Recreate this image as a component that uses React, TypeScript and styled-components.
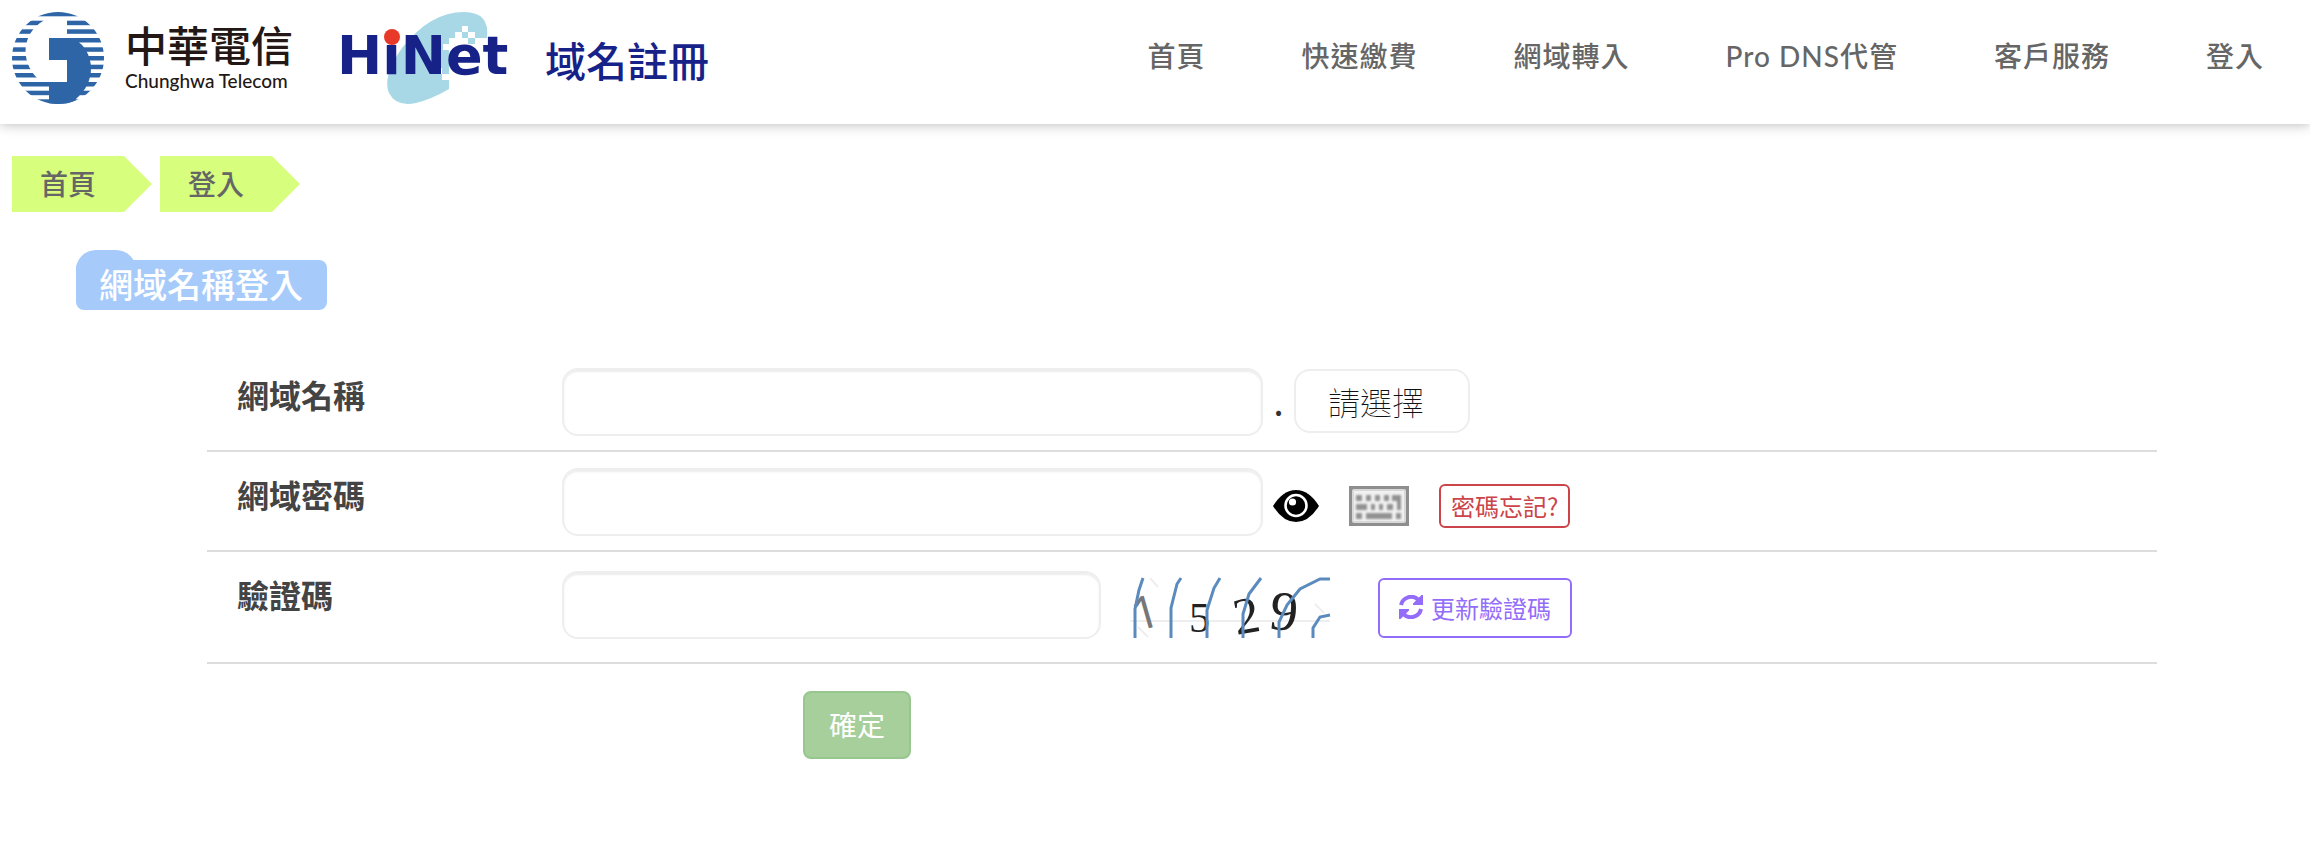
import React from "react";
import styled, { createGlobalStyle } from "styled-components";

const sans = `"Noto Sans CJK TC", "Noto Sans", sans-serif`;

const GlobalStyle = createGlobalStyle`
  *, *::before, *::after { box-sizing: border-box; }
  body { margin: 0; background: #fff; color: #444; font-family: ${sans}; }
`;

const Header = styled.header`
  display: flex;
  align-items: center;
  justify-content: space-between;
  height: 124px;
  padding: 0 46px 0 12px;
  background: #fff;
  box-shadow: 0 0 12px rgba(0, 0, 0, 0.3);
`;

const Brand = styled.a`
  display: flex;
  margin-bottom: 8px;
  text-decoration: none;
`;

const Nav = styled.nav`
  display: flex;
  gap: 96px;
  margin-bottom: 12px;
`;

const NavLink = styled.a`
  color: #666;
  font-family: Lato, ${sans};
  font-size: 28px;
  font-weight: 500;
  letter-spacing: 1px;
  line-height: 40px;
  text-decoration: none;
  white-space: nowrap;
`;

const Breadcrumbs = styled.nav`
  display: flex;
  gap: 8px;
  padding: 32px 12px 0;
`;

const Crumb = styled.a`
  width: 140px;
  padding: 0 0 2px 28px;
  background: #d7fe7d;
  clip-path: polygon(0 0, 112px 0, 100% 50%, 112px 100%, 0 100%);
  color: #666;
  font-size: 28px;
  font-weight: 500;
  line-height: 54px;
  text-decoration: none;
`;

const Title = styled.h1`
  position: relative;
  width: max-content;
  margin: 48px 0 0 76px;
  padding: 0 24px 2px 23px;
  border-radius: 8px;
  background: #a6cbfb;
  color: #fff;
  font-size: 34px;
  font-weight: 500;
  line-height: 48px;

  &::before {
    content: "";
    position: absolute;
    z-index: -1;
    top: -10px;
    left: 0;
    width: 60px;
    height: 40px;
    border-radius: 20px 20px 0 0;
    background: #a6cbfb;
  }
`;

const Form = styled.form`
  margin: 42px 153px 0 207px;
`;

const Row = styled.div<{ $tall?: boolean }>`
  display: flex;
  align-items: flex-start;
  min-height: ${(p) => (p.$tall ? 112 : 100)}px;
  border-bottom: 2px solid #ddd;
`;

const Label = styled.label`
  flex: 0 0 355px;
  padding: 18px 0 0 30px;
  font-size: 32px;
  font-weight: 700;
  line-height: 48px;
`;

const Controls = styled.div<{ $tall?: boolean }>`
  display: flex;
  flex: 1;
  align-items: center;
  padding-top: ${(p) => (p.$tall ? 19 : 16)}px;
`;

const TextInput = styled.input<{ $width: number }>`
  flex: 0 1 ${(p) => p.$width}px;
  min-width: 0;
  height: 68px;
  padding: 0 16px;
  border: 2px solid #eee;
  border-radius: 16px;
  background: #fff;
  box-shadow: inset 0 2px 2px rgba(0, 0, 0, 0.075);
  color: #444;
  font: 400 32px ${sans};
`;

const Dot = styled.span`
  width: 31px;
  color: #333;
  font-size: 32px;
  font-weight: 500;
  line-height: 40px;
  text-align: center;
`;

const Select = styled.select`
  width: 176px;
  height: 64px;
  margin-bottom: 2px;
  padding: 0 32px;
  border: 2px solid #eee;
  border-radius: 16px;
  appearance: none;
  background: #fff;
  color: #111;
  font: 100 32px ${sans};
`;

const Tools = styled.div`
  display: flex;
  align-items: center;
  gap: 30px;
  margin: 8px 0 0 10px;
`;

const IconButton = styled.button`
  display: block;
  padding: 0;
  border: 0;
  background: none;
  line-height: 0;
`;

const OutlineButton = styled.button<{ $color: string; $height: number; $pad: number }>`
  display: flex;
  align-items: center;
  gap: 8px;
  height: ${(p) => p.$height}px;
  padding: 0 ${(p) => p.$pad}px 2px;
  border: 2px solid ${(p) => p.$color};
  border-radius: 6px;
  background: #fff;
  color: ${(p) => p.$color};
  font: 400 24px ${sans};
  white-space: nowrap;
`;

const Captcha = styled.div`
  display: flex;
  gap: 48px;
  margin: 6px 0 0 29px;
`;

const CaptchaSvg = styled.svg`
  overflow: visible;
`;

const Actions = styled.div`
  padding: 27px 0 0 596px;
`;

const Submit = styled.button`
  height: 68px;
  padding: 0 24px 2px;
  border: 2px solid #98c68f;
  border-radius: 8px;
  background: #a6cf9b;
  color: #fff;
  font: 400 28px ${sans};
`;

const stripes = [20.7, 29.3, 38, 47.3, 56, 64.7, 73, 82, 90.7, 99.3];

/* Globe with blue stripes, crossed by a white hook and a blue hook */
const TelecomLogo = () => (
  <svg width="300" height="100" viewBox="12 8 300 100" role="img" aria-label="中華電信 Chunghwa Telecom">
    <defs>
      <clipPath id="globe"><circle cx="58" cy="58" r="46" /></clipPath>
    </defs>
    <g clipPath="url(#globe)">
      <g fill="#2d65a7">
        <rect x="12" y="12" width="92" height="4.3" />
        {stripes.map((y) => (
          <rect key={y} x="12" y={y} width="92" height="4.5" />
        ))}
      </g>
      <path d="M46 17 H67 V38 H49 V60 H67 V82 H41 L37 78 C20 60 22 34 43 21Z" fill="#fff" />
      <path d="M49 38 H81 L79 42.5 C87 48 91 60 91 68 C91 80 86 90 76 99 L73 104 H49 V82 H67 V60 H49Z" fill="#2d65a7" />
    </g>
    <text x="125" y="62" fill="#231815" fontFamily="Noto Sans CJK TC, sans-serif" fontSize="42" fontWeight="500">中華電信</text>
    <text x="125" y="88" fill="#231815" fontFamily="Lato, sans-serif" fontSize="19" fontWeight="500">Chunghwa Telecom</text>
  </svg>
);

const HiNetLogo = () => (
  <svg width="400" height="100" viewBox="312 8 400 100" role="img" aria-label="HiNet 域名註冊">
    <path d="M449 38 H468 V44 H475 V38 H487 Q490 12 464 12 Q430 12 402 48 Q382 76 389 93 Q396 107 416 103 Q432 99 449 89Z" fill="#a8d8e6" />
    <path d="M462 26h6v6h-6zM455 32h7v6h-7zM468 32h7v6h-7zM462 38h6v6h-6zM443 44h6v6h-6zM436 68h6v6h-6zM442 74h7v6h-7z" fill="#fff" />
    <text x="337" y="74" fill="#162288" fontFamily="DejaVu Sans, sans-serif" fontSize="54" fontWeight="700">HiNet</text>
    <circle cx="392" cy="37" r="8" fill="#e83828" />
    <text x="545" y="77" fill="#162288" fontFamily="Noto Sans CJK TC, sans-serif" fontSize="41" fontWeight="500">域名註冊</text>
  </svg>
);

const EyeIcon = () => (
  <svg width="46" height="32" viewBox="0 0 46 32" aria-hidden="true">
    <path d="M0 16 Q10 0 23 0 Q36 0 46 16 Q36 32 23 32 Q10 32 0 16Z" fill="#000" />
    <circle cx="23" cy="15.5" r="10.5" fill="#000" stroke="#fff" strokeWidth="2.6" />
    <circle cx="19.500" cy="12" r="3.600" fill="#fff" />
  </svg>
);

const KeyboardIcon = () => (
  <svg width="60" height="40" viewBox="0 0 60 40" aria-hidden="true">
    <defs>
      <filter id="keys"><feGaussianBlur stdDeviation="0.8" /></filter>
    </defs>
    <rect width="60" height="40" fill="#8e8e8e" />
    <rect x="3" y="3" width="54" height="34" rx="2" fill="#d8d8d8" />
    <rect x="5" y="5" width="50" height="30" fill="#f1f1f1" />
    <path filter="url(#keys)" d="M7 9h6v6H7zM17 9h5v6h-5zM26 9h5v6h-5zM35 9h5v6h-5zM43 9h9v15h-4v-9h-5zM7 18h11v6H7zM22 18h4v6h-4zM30 18h4v6h-4zM38 18h6v6h-6zM7 27h6v6H7zM17 27h26v6H17zM47 27h5v6h-5z" fill="#929292" />
  </svg>
);

const RefreshIcon = () => (
  <svg width="24" height="24" viewBox="0 0 24 24" aria-hidden="true">
    <path d="M2 10 A10.3 10.3 0 0 1 19 4.5" fill="none" stroke="currentColor" strokeWidth="4" />
    <path d="M22 14 A10.3 10.3 0 0 1 5 19.5" fill="none" stroke="currentColor" strokeWidth="4" />
    <path d="M24 0V10H14V8.500L22.500 0ZM0 24V14H10V15.500L1.500 24Z" fill="currentColor" />
  </svg>
);

const CaptchaImage = () => (
  <CaptchaSvg width="200" height="60" viewBox="0 0 200 60" role="img" aria-label="驗證碼">
    <path d="M0 43H200M20 0L28 9M8 49L18 59M185 26L194 35" stroke="#eee" strokeWidth="2" fill="none" />
    <g fontFamily="Liberation Serif, serif" fill="#222">
      <text x="2" y="50" fontFamily="Noto Sans, sans-serif" fontSize="46" fill="#777" transform="rotate(-16 18 34)">1</text>
      <text x="59" y="54" fontSize="42">5</text>
      <text x="103" y="55" fontSize="52" transform="rotate(-10 116 36)">2</text>
      <text x="140" y="52" fontSize="56" transform="rotate(6 154 34)">9</text>
    </g>
    <path d="M5 60V31L9 12L13 0M41 60V30L47 6L51 0M77 60V32L84 10L90 0M113 60V36L119 16L131 0M149 60V44L157 27L170 11L190 1H200M183 60V50L190 39L200 37" fill="none" stroke="#5b8bbd" strokeWidth="3" />
  </CaptchaSvg>
);

const navItems = ["首頁", "快速繳費", "網域轉入", "Pro DNS代管", "客戶服務", "登入"];

export default function App() {
  return (
    <>
      <GlobalStyle />
      <Header>
        <Brand href="#">
          <TelecomLogo />
          <HiNetLogo />
        </Brand>
        <Nav>
          {navItems.map((item) => (
            <NavLink key={item} href="#">{item}</NavLink>
          ))}
        </Nav>
      </Header>
      <Breadcrumbs aria-label="breadcrumb">
        <Crumb href="#">首頁</Crumb>
        <Crumb href="#">登入</Crumb>
      </Breadcrumbs>
      <main>
        <Title>網域名稱登入</Title>
        <Form onSubmit={(e) => e.preventDefault()}>
          <Row>
            <Label htmlFor="domain">網域名稱</Label>
            <Controls>
              <TextInput id="domain" type="text" $width={701} />
              <Dot>.</Dot>
              <Select aria-label="網域類別" defaultValue="">
                <option value="">請選擇</option>
              </Select>
            </Controls>
          </Row>
          <Row>
            <Label htmlFor="password">網域密碼</Label>
            <Controls>
              <TextInput id="password" type="password" $width={701} />
              <Tools>
                <IconButton type="button" aria-label="顯示密碼"><EyeIcon /></IconButton>
                <IconButton type="button" aria-label="螢幕鍵盤"><KeyboardIcon /></IconButton>
                <OutlineButton type="button" $color="#cb444a" $height={44} $pad={10}>密碼忘記?</OutlineButton>
              </Tools>
            </Controls>
          </Row>
          <Row $tall>
            <Label htmlFor="captcha">驗證碼</Label>
            <Controls $tall>
              <TextInput id="captcha" type="text" $width={539} />
              <Captcha>
                <CaptchaImage />
                <OutlineButton type="button" $color="#936dfa" $height={60} $pad={19}>
                  <RefreshIcon />
                  更新驗證碼
                </OutlineButton>
              </Captcha>
            </Controls>
          </Row>
          <Actions>
            <Submit type="submit">確定</Submit>
          </Actions>
        </Form>
      </main>
    </>
  );
}
